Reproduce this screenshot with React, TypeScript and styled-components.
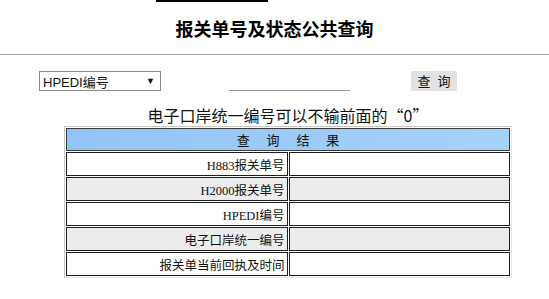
import React from "react";
import styled, { createGlobalStyle } from "styled-components";

const GlobalStyle = createGlobalStyle`
  html, body {
    margin: 0;
    padding: 0;
    background: #ffffff;
  }
  body {
    font-family: "Noto Sans CJK SC", "Liberation Sans", sans-serif;
    color: #000;
  }
`;

const Page = styled.div`
  width: 549px;
  height: 299px;
  overflow: hidden;
  background: #fff;
`;

const TopBar = styled.div`
  height: 4px;
  overflow: hidden;
  display: flex;
  padding-left: 156px;
`;

const TopLink = styled.a<{ $gap?: number }>`
  display: block;
  margin-top: -15px;
  margin-left: ${({ $gap }) => $gap ?? 0}px;
  font-size: 14px;
  line-height: 16px;
  color: #000;
  text-decoration: underline;
  text-decoration-thickness: 2px;
  white-space: nowrap;
`;

const Title = styled.h1`
  margin: 12px 0 14px;
  font-size: 18px;
  line-height: 24px;
  font-weight: bold;
  text-align: center;
  letter-spacing: 0;
`;

const Rule = styled.hr`
  margin: 0;
  border: none;
  border-top: 1px solid #a2a2a2;
`;

const FormRow = styled.div`
  display: flex;
  align-items: flex-end;
  margin-top: 16px;
  padding-left: 39px;
  height: 20px;
`;

const SelectBox = styled.div`
  box-sizing: border-box;
  width: 122px;
  height: 20px;
  border: 1px solid #8a8a8a;
  background: #fff;
  display: flex;
  align-items: center;
  justify-content: space-between;
  padding: 0 5px 0 3px;
  font-family: "Liberation Sans", "Noto Sans CJK SC", sans-serif;
  font-size: 13px;
  color: #111;
`;

const Arrow = styled.span`
  font-size: 9px;
  line-height: 1;
`;

const QueryInput = styled.input`
  box-sizing: border-box;
  width: 121px;
  height: 20px;
  margin-left: 68px;
  border: none;
  border-bottom: 1px solid #9a9a9a;
  outline: none;
  background: transparent;
`;

const QueryButton = styled.button`
  box-sizing: border-box;
  width: 46px;
  height: 20px;
  margin-left: 61px;
  border: none;
  background: #e2e2e2;
  font-family: "Noto Sans CJK SC", sans-serif;
  font-size: 13px;
  line-height: 20px;
  padding: 0;
  color: #111;
  word-spacing: 4px;
`;

const ResultArea = styled.div`
  width: 448px;
  margin-left: 64px;
  margin-top: 14px;
`;

const Caption = styled.div`
  font-size: 16px;
  line-height: 21px;
  text-align: center;
  color: #111;
`;

const Table = styled.table`
  width: 448px;
  border-collapse: separate;
  border-spacing: 1px;
  border: 1px solid;
  border-color: #c8c8c8 #e6e6e6 #e6e6e6 #c8c8c8;
  table-layout: fixed;
`;

const HeaderCell = styled.th`
  height: 21px;
  border: 1px solid #3a3a3a;
  background: linear-gradient(to right, #93c4f5, #a6d1fb);
  font-weight: normal;
  font-size: 13px;
  color: #111;
  word-spacing: 14px;
  padding: 0;
`;

const Cell = styled.td<{ $shade?: boolean; $label?: boolean }>`
  height: 22px;
  border: 1px solid #1e1e1e;
  background: ${({ $shade }) => ($shade ? "#ececec" : "#ffffff")};
  text-align: ${({ $label }) => ($label ? "right" : "left")};
  font-family: "Liberation Serif", "Noto Sans CJK SC", serif;
  font-size: 12.5px;
  color: #111;
  padding: 0 2px 0 0;
  white-space: nowrap;
`;

const rows = [
  "H883报关单号",
  "H2000报关单号",
  "HPEDI编号",
  "电子口岸统一编号",
  "报关单当前回执及时间",
];

export default function App() {
  return (
    <>
      <GlobalStyle />
      <Page>
        <TopBar>
          <TopLink href="#">海关总署网站首页</TopLink>
          <TopLink href="#" $gap={289}>
            返回
          </TopLink>
        </TopBar>
        <Title>报关单号及状态公共查询</Title>
        <Rule />
        <FormRow>
          <SelectBox>
            <span>HPEDI编号</span>
            <Arrow>▼</Arrow>
          </SelectBox>
          <QueryInput type="text" />
          <QueryButton type="button">查 询</QueryButton>
        </FormRow>
        <ResultArea>
          <Caption>电子口岸统一编号可以不输前面的“0”</Caption>
          <Table>
            <thead>
              <tr>
                <HeaderCell colSpan={2}>查 询 结 果</HeaderCell>
              </tr>
            </thead>
            <tbody>
              {rows.map((label, i) => (
                <tr key={label}>
                  <Cell $label $shade={i % 2 === 1}>
                    {label}
                  </Cell>
                  <Cell $shade={i % 2 === 1} />
                </tr>
              ))}
            </tbody>
          </Table>
        </ResultArea>
      </Page>
    </>
  );
}
